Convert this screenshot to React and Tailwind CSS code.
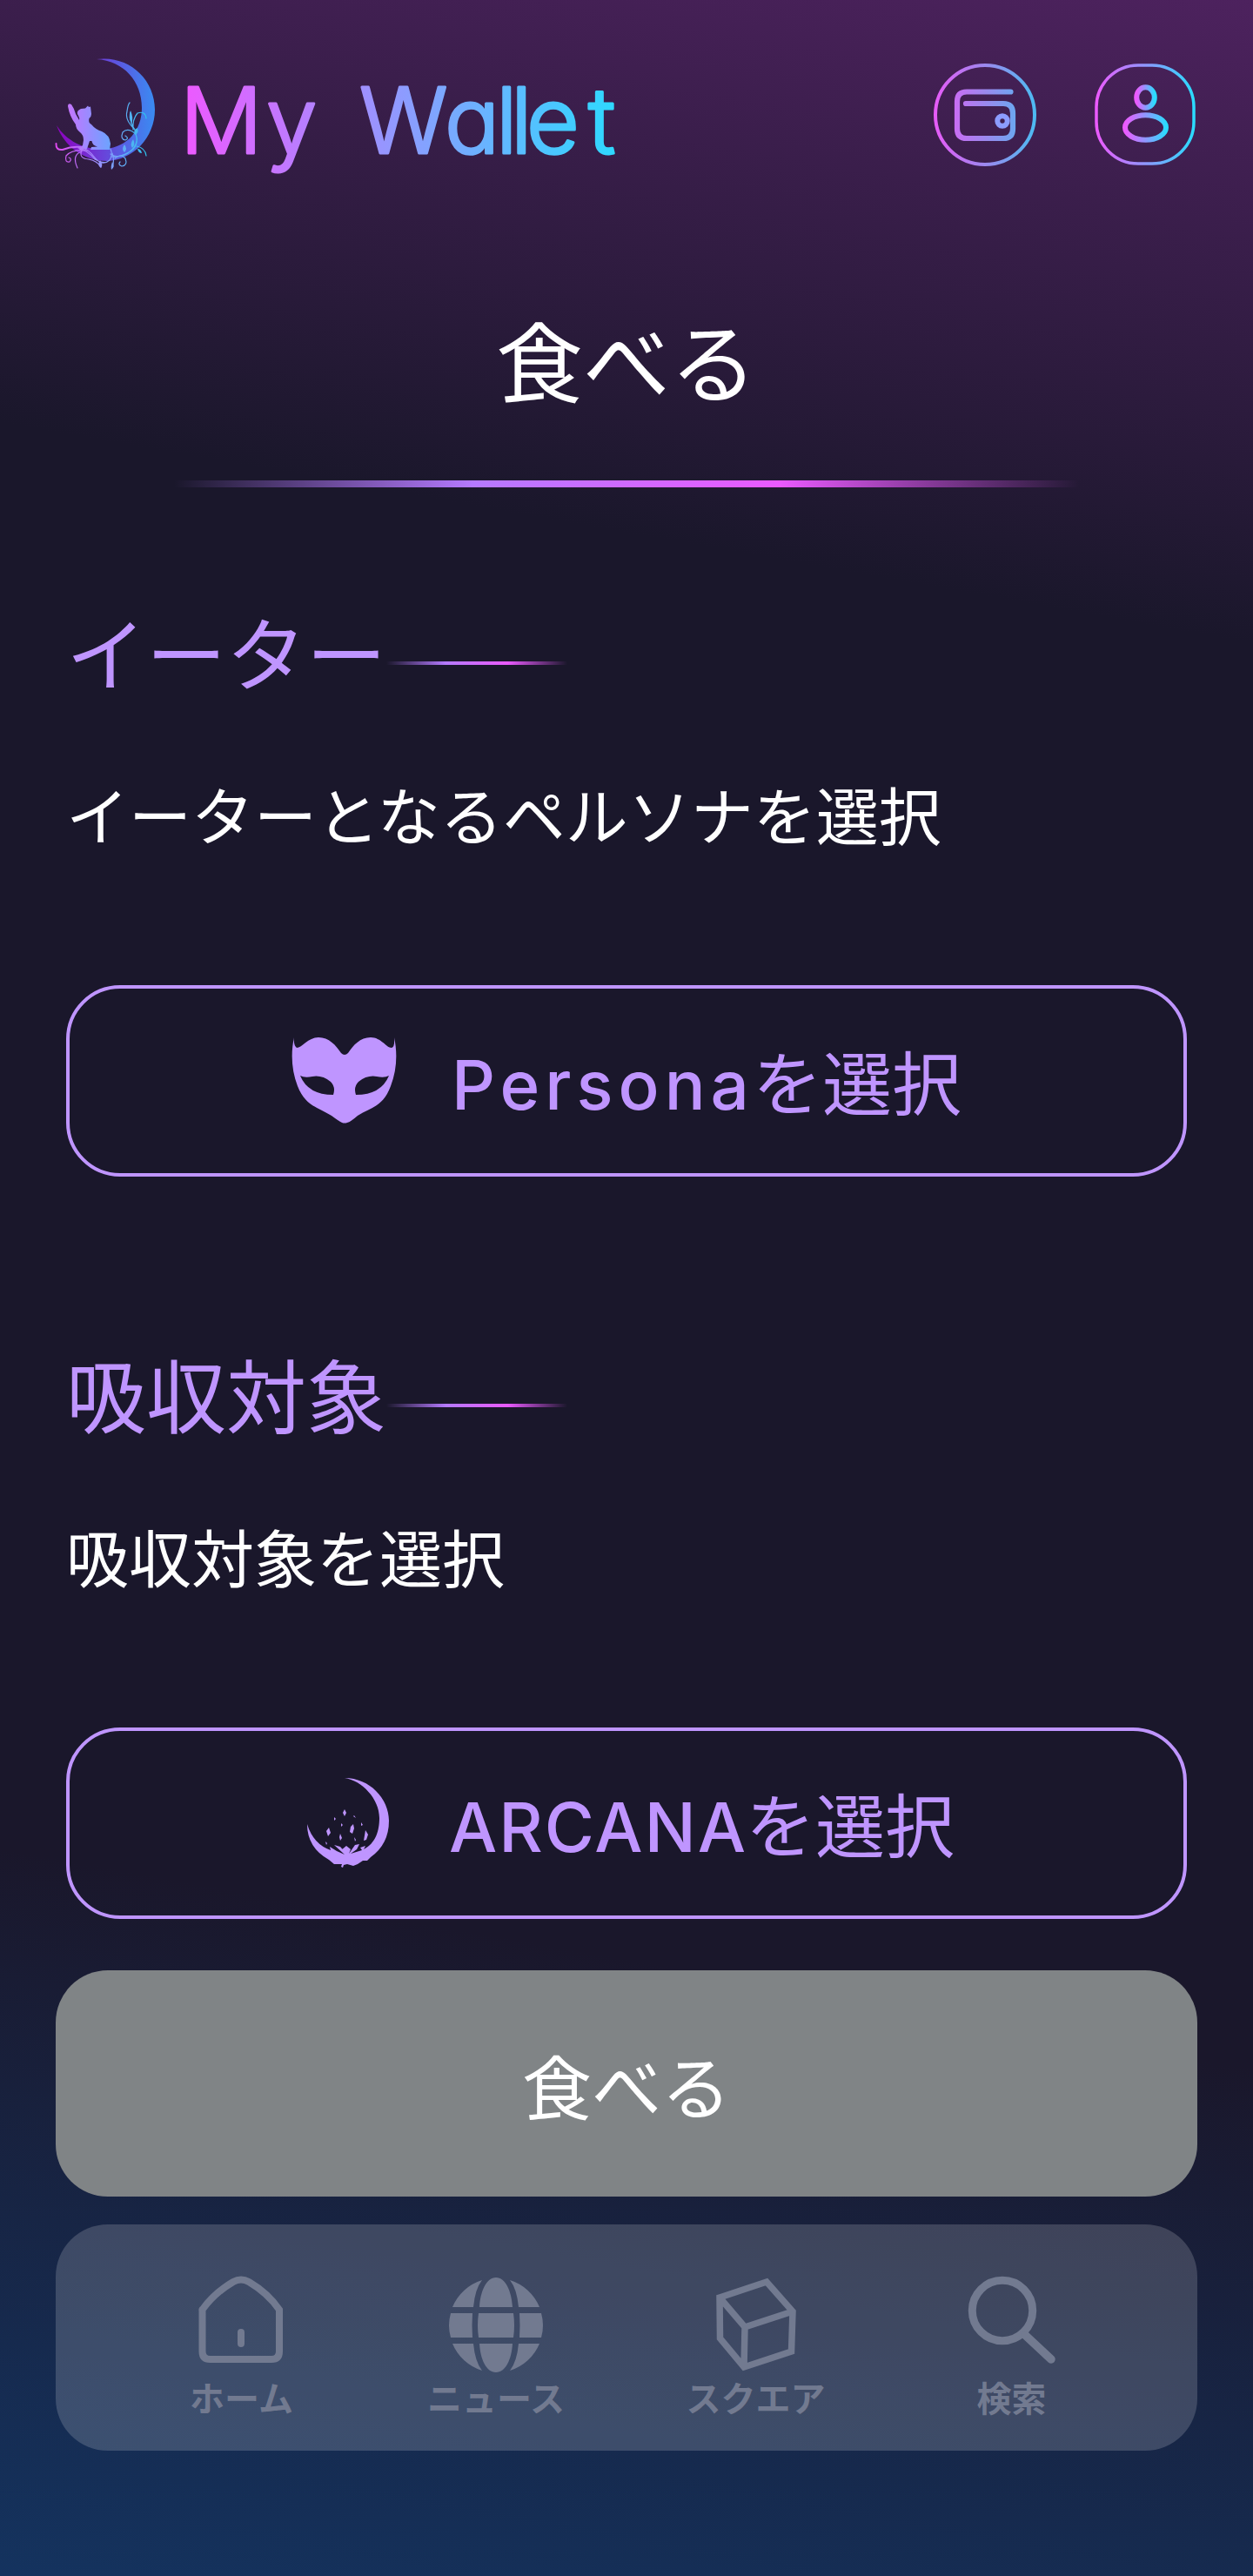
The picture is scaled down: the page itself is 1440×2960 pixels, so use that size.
const JP = "font-['Noto_Sans_CJK_JP',sans-serif]";

function Defs() {
  return (
    <svg className="absolute size-0" aria-hidden="true">
      <defs>
        <linearGradient id="neon" x1="0" x2="1" y1="0" y2="0">
          <stop offset="0" stopColor="#ec5aff" />
          <stop offset=".5" stopColor="#8f97ff" />
          <stop offset="1" stopColor="#2adcff" />
        </linearGradient>
        <linearGradient id="brand" gradientUnits="userSpaceOnUse" x1="0" x2="504" y1="0" y2="0">
          <stop offset="0" stopColor="#ec5aff" />
          <stop offset=".42" stopColor="#9c92ff" />
          <stop offset="1" stopColor="#2adcff" />
        </linearGradient>
        <linearGradient id="wallet" gradientUnits="userSpaceOnUse" x1="0" x2="118" y1="0" y2="0">
          <stop offset="0" stopColor="#e85af8" />
          <stop offset=".5" stopColor="#9c88ee" />
          <stop offset="1" stopColor="#4bbcf2" />
        </linearGradient>
        <linearGradient id="moon" gradientUnits="userSpaceOnUse" x1="24" x2="138" y1="0" y2="0">
          <stop offset="0" stopColor="#8f00c0" />
          <stop offset=".45" stopColor="#6b3fd8" />
          <stop offset="1" stopColor="#3a8cf2" />
        </linearGradient>
        <linearGradient id="cat" gradientUnits="userSpaceOnUse" x1="36" x2="88" y1="0" y2="0">
          <stop offset="0" stopColor="#c873ff" />
          <stop offset="1" stopColor="#6aa4ff" />
        </linearGradient>
        <linearGradient id="vine" gradientUnits="userSpaceOnUse" x1="24" x2="130" y1="0" y2="0">
          <stop offset="0" stopColor="#e048f0" />
          <stop offset=".45" stopColor="#9d90ff" />
          <stop offset="1" stopColor="#2ac4ec" />
        </linearGradient>
      </defs>
    </svg>
  );
}

function MoonCat() {
  return (
    <svg className="h-[150px] w-[130px] shrink-0" viewBox="20 55 130 150" fill="none">
      <path fill="url(#moon)" d="M71 68C108 63 138 91 138 126C138 158 113 184 83 185C56 185 34 168 25 144C38 164 60 173 81 171C107 169 123 149 123 124C123 93 102 70 71 68Z" />
      <path fill="url(#cat)" d="M38 122Q38 118 42 120Q45 124 47 131L51 138Q52 136 49 131Q48 127 53 125L58 124.500L61 121.500L62 123L64 122.500L65 131Q65 134 62.500 136Q61 141 65 143Q70 149 77 151Q86 155 87 165L86 172H64L65 169L72 168.500Q66 167 65.500 162L63 162L60 171L52 172.500L51 171L55 167L56 161Q56 155 52 152Q47 148 47 143Q40 134 38 122Z" />
      <g stroke="url(#vine)" strokeWidth="1.200" strokeLinecap="round">
        <path strokeWidth="2" d="M24.500 165Q24 173 32 172Q42 168 53 169" />
        <path d="M53 169Q62 172 68 180Q77 192 86 184Q90 178 87 171M50 170Q61 173 69 183Q78 188 83 186" />
        <path d="M60 173Q43 171 36 179Q34 187 40 186Q43 182 39 181M54 174Q42 178 49 193M54 173Q50 182 62 183Q72 185 76 192" />
        <path d="M87 177Q95 183 107 176Q116 170 117.500 160L115 150M88 180Q97 181 108 175Q119 169 117 157" />
        <path d="M116 150Q103 138 106 128Q107 120 109 118M115 149Q109 142 110 129M113 149Q112 137 118 130Q127 127 128 136" />
        <path d="M116 154Q107 146 101 152Q98 160 104 161Q109 159 104 156" />
        <path d="M92 182Q99 176 104 182Q107 190 100 191Q95 189 98 186M89 176Q92 184 89 192M117 168Q127 170 128 179" />
      </g>
      <g fill="url(#vine)">
        <path d="M118 147Q113 149 115 155Q120 153 118 147ZM103 166Q99 172 103 175Q107 171 103 166ZM75 184Q71 190 76 193Q79 189 75 184ZM89 186Q87 192 88 195Q93 191 89 186ZM110 127Q107 135 111 142Q114 136 110 127ZM113 160Q109 166 112 170Q116 166 113 160ZM118 171Q119 176 123 176Q122 171 118 171Z" />
      </g>
    </svg>
  );
}

function BrandName() {
  return (
    <h1 className="ml-6 font-['Inter',sans-serif] text-[105px] font-light">
      <svg className="h-[120px] w-[510px] overflow-visible" viewBox="0 0 510 120">
        <text
          x="-7 92 163 199 297 356 373 391 462"
          y="86"
          fill="url(#brand)"
          stroke="url(#brand)"
          strokeWidth="3"
          strokeLinejoin="round"
          className="[font-feature-settings:'cv11','ss03']"
        >
          My Wallet
        </text>
      </svg>
    </h1>
  );
}

function WalletIcon() {
  return (
    <svg className="size-[118px]" viewBox="0 0 118 118" fill="none" stroke="url(#wallet)" strokeLinecap="round">
      <circle cx="59" cy="59" r="57" strokeWidth="4" />
      <path strokeWidth="6.2" d="M88.500 32.500H38Q27 32.500 27 43.500V75Q27 86 38 86H80Q91 86 91 75V57Q91 46 80 46H37" />
      <circle cx="79" cy="66" r="5.700" strokeWidth="6" stroke="#8c9cff" />
    </svg>
  );
}

function UserIcon() {
  return (
    <svg className="h-[117px] w-[116px]" viewBox="0 0 116 117" fill="none" stroke="url(#neon)">
      <rect x="2" y="2" width="112" height="113" rx="48" strokeWidth="3.500" />
      <ellipse cx="58.500" cy="39" rx="10.300" ry="11.700" strokeWidth="6" />
      <ellipse cx="58.500" cy="73.500" rx="23.500" ry="14.300" strokeWidth="6" />
    </svg>
  );
}

function MaskIcon() {
  return (
    <svg className="h-[100px] w-[122px] shrink-0" viewBox="0 0 122 100" fill="#bf95ff" fillRule="evenodd">
      <path d="M3 0Q2 9 6 12C12 12 19 0 31 0C43 0 51 9 57 18Q61 22 65 18C71 9 79 0 91 0C103 0 109 12 115 12Q119 11 118 0C122 18 121 38 114 56C105 80 92 80 76 90Q68 97 64 98Q61 99 58 98Q54 96 46 90C30 80 16 79 7 56C0 38 -1 18 3 0ZM10 44Q19 66 48 66Q51 57 45 51Q35 43 24 45Q15 47 10 44ZM112 44Q103 66 74 66Q71 57 77 51Q87 43 98 45Q107 47 112 44Z" />
    </svg>
  );
}

function ArcanaIcon() {
  return (
    <svg className="ml-[10px] h-[104px] w-[94px] shrink-0" viewBox="0 0 94 104" fill="#bf95ff">
      <path d="M43 0C72 0 94 24 94 49Q94 76 73 91L69 95L64 95L58 99L53 101L46 99L42 100L41 103L39 102L40 99L31 99L25 94Q0 80 0 53Q7 76 27 83L26 79L34 84L43 88L31 77L38 79L45 87L39 83L45 78L50 82L48 87L55 77L60 76L57 82L50 87L63 83L61 80L67 78L65 82C79 75 83 60 83 46C83 24 63 3 43 0Z" />
      <path d="M43 36L45 40L43 44L41 40ZM31 45L33 47L31 49ZM54 43L56 46L53 44ZM39 52L41 54L39 56ZM62 51L64 54L62 55ZM25 57L27 63L24 67L22 61ZM53 53L54 58L52 64L49 62L50 56ZM67 60L70 65L68 71L65 72ZM38 64L40 69L38 72L37 68ZM54 68L56 71L55 73ZM21 73L23 75L22 77Z" />
    </svg>
  );
}

const navItems = [
  {
    label: "ホーム",
    className: "",
    icon: (
      <path d="M8.500 38V86Q8.500 95 17.500 95H88Q97 95 97 86V38Q84 19 62 6Q53 1 44 6Q22 19 8.500 38M53 64V77" fill="none" stroke="currentColor" strokeWidth="8" strokeLinecap="round" />
    ),
  },
  {
    label: "ニュース",
    className: "pr-[5px]",
    icon: (
      <g fill="currentColor">
        <path d="M38 4A54 54 0 0 0 4 35H28Q30 14 38 4ZM70 4A54 54 0 0 1 104 35H80Q78 14 70 4ZM54 1C43 1 36 17 35 35H73C72 17 65 1 54 1ZM2 42H27Q26 56 27 70H2Q-2 56 2 42ZM34 42H74Q76 56 74 70H34Q32 56 34 42ZM81 42H106Q110 56 106 70H81Q82 56 81 42ZM4 77H28Q30 98 38 108A54 54 0 0 1 4 77ZM35 77H73C72 95 65 110 54 110C43 110 36 95 35 77ZM80 77H104A54 54 0 0 1 70 108Q78 98 80 77Z" />
      </g>
    ),
  },
  {
    label: "スクエア",
    className: "pl-[2px]",
    icon: (
      <path d="M12 24L66 6L96 40L94.500 86L40 104L12.500 71ZM12 24L41 58L96 40M41 58L40 104" fill="none" stroke="currentColor" strokeWidth="7.500" />
    ),
  },
  {
    label: "検索",
    className: "",
    icon: (
      <g fill="none" stroke="currentColor" strokeWidth="9" strokeLinecap="round">
        <circle cx="43" cy="39" r="34.700" />
        <path d="M69 67L99 95" strokeWidth="9.500" />
      </g>
    ),
  },
];

function Section({ title, text, children }) {
  return (
    <section className="flex flex-col">
      <h2 className="flex h-[92px] items-center text-[92px] leading-[92px] text-[#bf95ff]">
        <span className="whitespace-nowrap">{title}</span>
        <span className="mt-[30px] h-1 w-[208px] bg-[linear-gradient(90deg,transparent,#b57aff_33%,#ea5aff_67%,transparent)]" />
      </h2>
      <p className="mt-[105px] h-[72px] text-[72px] leading-[72px] text-white">{text}</p>
      <button className="mt-[162px] flex h-[220px] w-full items-center justify-center rounded-[62px] border-4 border-[#bf95ff] text-[80px] text-[#bf95ff]">
        {children}
      </button>
    </section>
  );
}

export default function App() {
  return (
    <div className={`${JP} relative flex h-[2960px] w-[1440px] flex-col overflow-hidden bg-[linear-gradient(190deg,#4d225e_0%,#1a172b_23%,#1a172b_74%,#14335f_100%)]`}>
      <Defs />
      <header className="flex h-[264px] shrink-0 items-start pl-[60px] pr-[66px] pt-[55px]">
        <MoonCat />
        <div className="pt-[35px]">
          <BrandName />
        </div>
        <div className="ml-auto flex gap-[67px] pt-[18px]">
          <WalletIcon />
          <UserIcon />
        </div>
      </header>
      <div className="mt-[98px] h-[100px] shrink-0 text-center text-[100px] leading-[100px] text-white">食べる</div>
      <div className="mx-auto mt-[90px] h-2 w-[1040px] shrink-0 bg-[linear-gradient(90deg,transparent,#b57aff_33%,#ea5aff_67%,transparent)]" />
      <main className="mt-[141px] flex shrink-0 flex-col gap-[202px] px-[76px]">
        <Section title="イーター" text="イーターとなるペルソナを選択">
          <MaskIcon />
          <span className="ml-[62px] flex items-baseline">
            <span className="w-[346px] text-left font-['Inter',sans-serif] text-[78px] font-medium tracking-[6px]">Persona</span>
            を選択
          </span>
        </Section>
        <Section title="吸収対象" text="吸収対象を選択">
          <ArcanaIcon />
          <span className="ml-[69px] flex items-baseline">
            <span className="w-[341px] text-left font-['Inter',sans-serif] text-[78px] font-medium tracking-[2px]">ARCANA</span>
            を選択
          </span>
        </Section>
      </main>
      <button className="mx-16 mt-[59px] h-[260px] shrink-0 rounded-[60px] bg-[#808486] text-[80px] text-white">食べる</button>
      <nav className="mx-16 mt-8 grid h-[260px] shrink-0 grid-cols-4 rounded-[60px] bg-white/17 px-[66px] text-[#727a90]">
        {navItems.map((item) => (
          <a key={item.label} className={`flex flex-col items-center pt-[60px] text-[40px] font-bold leading-[60px] ${item.className}`}>
            <svg className="size-[108px] overflow-visible" viewBox="0 0 108 108">{item.icon}</svg>
            {item.label}
          </a>
        ))}
      </nav>
    </div>
  );
}
